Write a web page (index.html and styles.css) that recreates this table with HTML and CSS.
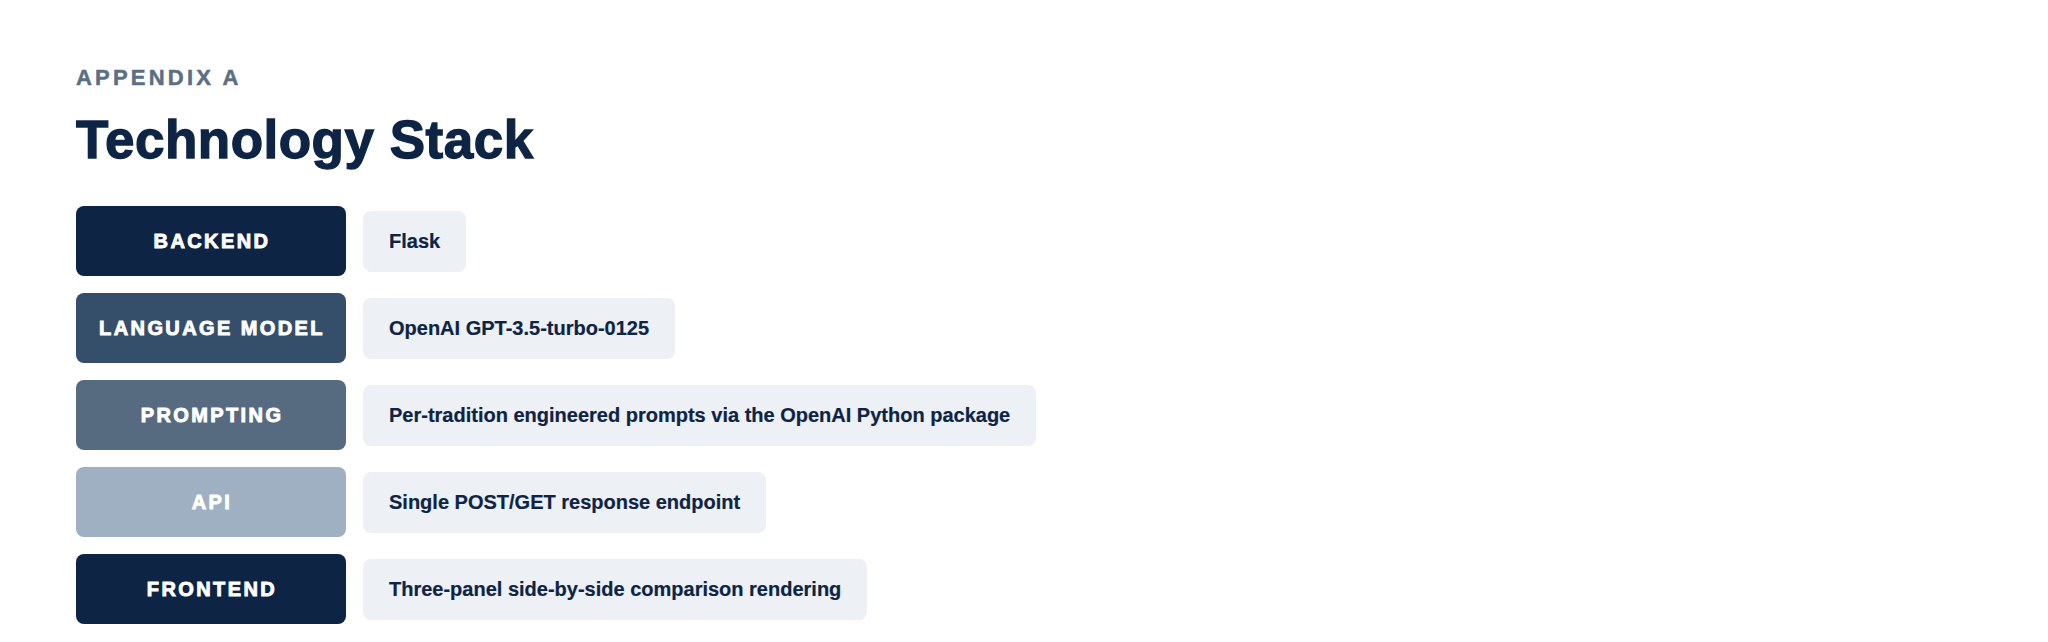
FILE: index.html
```html
<!DOCTYPE html>
<html lang="en">
<head>
<meta charset="utf-8">
<title>Technology Stack</title>
<link rel="stylesheet" href="styles.css">
</head>
<body>
<main class="page">
  <p class="eyebrow">APPENDIX A</p>
  <h1 class="title">Technology Stack</h1>
  <section class="stack">
    <div class="row">
      <div class="label label-navy">BACKEND</div>
      <div class="value">Flask</div>
    </div>
    <div class="row">
      <div class="label label-slate">LANGUAGE MODEL</div>
      <div class="value">OpenAI GPT-3.5-turbo-0125</div>
    </div>
    <div class="row">
      <div class="label label-steel">PROMPTING</div>
      <div class="value">Per-tradition engineered prompts via the OpenAI Python package</div>
    </div>
    <div class="row">
      <div class="label label-mist">API</div>
      <div class="value">Single POST/GET response endpoint</div>
    </div>
    <div class="row">
      <div class="label label-navy">FRONTEND</div>
      <div class="value">Three-panel side-by-side comparison rendering</div>
    </div>
  </section>
</main>
</body>
</html>
```

FILE: styles.css
```css
html, body {
  margin: 0;
  padding: 0;
  background: #ffffff;
}

.page {
  padding: 65px 76px 0;
  font-family: "Liberation Sans", Arial, sans-serif;
  color: #0e2444;
}

.eyebrow {
  margin: 0;
  font-size: 22px;
  line-height: 25px;
  font-weight: 700;
  letter-spacing: 3.2px;
  color: #5b6f84;
  -webkit-text-stroke: 0.5px #5b6f84;
}

.title {
  margin: 20px 0 36px;
  font-size: 53px;
  line-height: 60px;
  font-weight: 700;
  letter-spacing: 0.5px;
  color: #0e2444;
  -webkit-text-stroke: 1.3px #0e2444;
}

.stack {
  display: flex;
  flex-direction: column;
  gap: 17px;
}

.row {
  display: flex;
  align-items: center;
  gap: 17px;
}

.label {
  width: 270px;
  height: 70px;
  flex: none;
  box-sizing: border-box;
  border-radius: 8px;
  display: flex;
  align-items: center;
  justify-content: center;
  padding-left: 2px;
  color: #ffffff;
  font-size: 20px;
  font-weight: 700;
  letter-spacing: 2.4px;
  -webkit-text-stroke: 0.9px #ffffff;
}

.label-navy { background: #0e2444; }
.label-slate { background: #354f6b; }
.label-steel { background: #566b80; }
.label-mist { background: #9eb0c2; }

.value {
  background: #edf1f5;
  border-radius: 8px;
  padding: 18px 26px;
  font-size: 20px;
  line-height: 25px;
  font-weight: 700;
  color: #0e2444;
  -webkit-text-stroke: 0.2px #0e2444;
}
```
